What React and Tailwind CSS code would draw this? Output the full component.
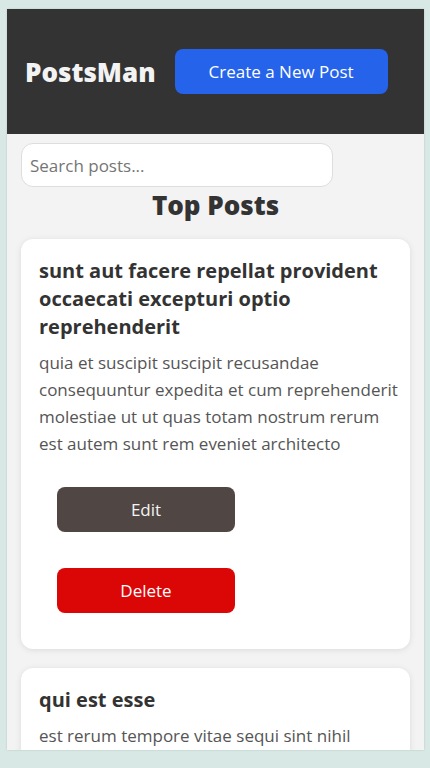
const posts = [
  {
    id: 1,
    title: 'sunt aut facere repellat provident occaecati excepturi optio reprehenderit',
    body: 'quia et suscipit suscipit recusandae consequuntur expedita et cum reprehenderit molestiae ut ut quas totam nostrum rerum est autem sunt rem eveniet architecto',
  },
  {
    id: 2,
    title: 'qui est esse',
    body: 'est rerum tempore vitae sequi sint nihil reprehenderit dolor beatae ea dolores neque fugiat blanditiis voluptate porro vel nihil molestiae ut reiciendis qui aperiam non debitis possimus qui neque nisi nulla',
  },
];

function PostCard({ post }) {
  return (
    <article className="rounded-xl bg-white py-[18px] pr-[10px] pl-[18px] shadow-[0_1px_6px_rgba(0,0,0,0.1)]">
      <h2 className="text-[20px] leading-7 font-bold text-[#333333]">{post.title}</h2>
      <p className="mt-2 text-[17px] leading-[27px] text-[#555555]">{post.body}</p>
      <div className="flex flex-col items-start gap-9 px-[18px] pt-[30px] pb-[18px]">
        <button type="button" className="h-[45px] w-[178px] rounded-lg bg-[#504644] text-[17px] text-[#f3f3f3]">
          Edit
        </button>
        <button type="button" className="h-[45px] w-[178px] rounded-lg bg-[#db0606] text-[17px] text-white">
          Delete
        </button>
      </div>
    </article>
  );
}

export default function App() {
  return (
    <div className="h-screen bg-[#d8e9e5] pt-[9px] pr-[6px] pb-[18px] pl-[7px] font-['Open_Sans','Noto_Sans',sans-serif]">
      <div className="h-full overflow-y-auto bg-[#f3f3f3] shadow-[0_0_2px_rgba(0,0,0,0.15)] [scrollbar-width:none]">
        <header className="flex items-center gap-[19px] bg-[#333333] px-[18px] py-10">
          <h1 className="text-[26px] leading-9 font-extrabold text-[#f3f3f3]">PostsMan</h1>
          <button type="button" className="h-[45px] w-[213px] rounded-lg bg-[#2563eb] text-[17px] text-white">
            Create a New Post
          </button>
        </header>
        <main className="px-[14px] pt-[9px]">
          <input
            type="text"
            aria-label="Search posts"
            placeholder="Search posts..."
            className="block h-11 w-[312px] max-w-full rounded-xl border border-[#dddddd] bg-white px-2 text-[17px] text-[#333333] placeholder:text-[#757575]"
          />
          <h2 className="text-center text-[26px] leading-9 font-extrabold text-[#333333]">Top Posts</h2>
          <div className="mt-4 flex flex-col gap-[19px]">
            {posts.map((post) => (
              <PostCard key={post.id} post={post} />
            ))}
          </div>
        </main>
      </div>
    </div>
  );
}
